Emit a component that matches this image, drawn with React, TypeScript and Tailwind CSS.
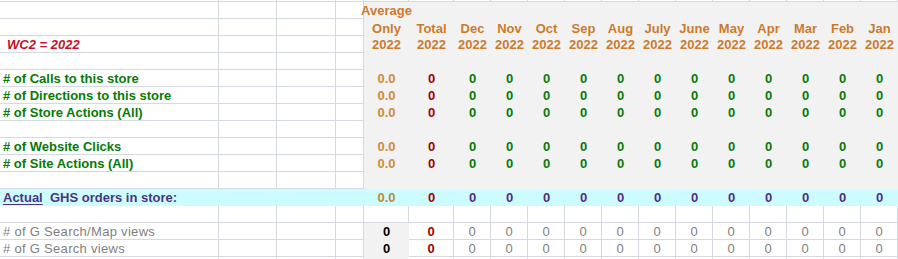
const months = ["Dec", "Nov", "Oct", "Sep", "Aug", "July", "June", "May", "Apr", "Mar", "Feb", "Jan"];

const grid = "grid grid-cols-[219px_58px_59px_28px_45px_45px_repeat(12,37px)]";
const line = "border-r border-b border-[#d5d9e1]";
const gray = "bg-[#f2f2f2]";
const cyan = "bg-[#ccfcff]";

const orange = "text-[#cc7a2c] font-bold";
const red = "text-[#9c0006] font-bold";
const green = "text-[#077a07] font-bold";
const purple = "text-[#4e2c8a] font-bold";

function Cell({ className = "", children }: { className?: string; children?: React.ReactNode }) {
  return (
    <div className={`h-full flex items-center justify-center whitespace-nowrap overflow-visible ${className}`}>
      {children}
    </div>
  );
}

// the four white columns on the left, label in the first one
function LeftCells({ label, labelClass = "", fill }: { label?: React.ReactNode; labelClass?: string; fill?: string }) {
  const base = fill ? fill : line;
  return (
    <>
      <Cell className={`${base} justify-start pl-[3px] ${labelClass}`}>{label}</Cell>
      <Cell className={base} />
      <Cell className={base} />
      <Cell className={base} />
    </>
  );
}

function GrayRow({ label, labelClass }: { label?: React.ReactNode; labelClass?: string }) {
  return (
    <div className={`${grid} h-[17px]`}>
      <LeftCells label={label} labelClass={labelClass} />
      {Array.from({ length: 14 }).map((_, i) => (
        <Cell key={i} className={gray} />
      ))}
    </div>
  );
}

function DataRow({ label }: { label: string }) {
  return (
    <div className={`${grid} h-[17px]`}>
      <LeftCells label={label} labelClass={green} />
      <Cell className={`${gray} text-[#d08a3c] font-bold`}>0.0</Cell>
      <Cell className={`${gray} ${red}`}>0</Cell>
      {months.map((m) => (
        <Cell key={m} className={`${gray} ${green}`}>0</Cell>
      ))}
    </div>
  );
}

function ViewsRow({ label }: { label: string }) {
  return (
    <div className={`${grid} h-[17px]`}>
      <LeftCells label={label} labelClass="text-[#7f7f7f] tracking-[0.3px]" />
      <Cell className={`${gray} font-bold text-black`}>0</Cell>
      <Cell className={`${line} ${red}`}>0</Cell>
      {months.map((m) => (
        <Cell key={m} className={`${line} text-[#808080]`}>0</Cell>
      ))}
    </div>
  );
}

export default function App() {
  return (
    <div className="w-[898px] h-[259px] overflow-hidden bg-white font-['Liberation_Sans',Arial,sans-serif] text-[13px] leading-none">
      {/* sliver of the row above */}
      <div className={`${grid} h-[2px]`}>
        {Array.from({ length: 18 }).map((_, i) => (
          <div key={i} className={line} />
        ))}
      </div>

      {/* header */}
      <div className={`${grid} h-[17px]`}>
        <LeftCells />
        <Cell className={gray}>
          <span className={`relative z-10 ${orange}`}>Average</span>
        </Cell>
        {Array.from({ length: 13 }).map((_, i) => (
          <Cell key={i} className={gray} />
        ))}
      </div>
      <div className={`${grid} h-[17px]`}>
        <LeftCells />
        <Cell className={`${gray} ${orange} pt-[2px]`}>Only</Cell>
        <Cell className={`${gray} ${orange} pt-[2px]`}>Total</Cell>
        {months.map((m) => (
          <Cell key={m} className={`${gray} ${orange} pt-[2px]`}>{m}</Cell>
        ))}
      </div>
      <div className={`${grid} h-[17px]`}>
        <LeftCells label="WC2 = 2022" labelClass="pl-[7px] italic font-bold text-[#c4122c]" />
        {Array.from({ length: 14 }).map((_, i) => (
          <Cell key={i} className={`${gray} ${orange}`}>2022</Cell>
        ))}
      </div>
      <GrayRow />

      <DataRow label="# of Calls to this store" />
      <DataRow label="# of Directions to this store" />
      <DataRow label="# of Store Actions (All)" />
      <GrayRow />
      <DataRow label="# of Website Clicks" />
      <DataRow label="# of Site Actions (All)" />
      <GrayRow />

      {/* orders */}
      <div className={`${grid} h-[17px]`}>
        <LeftCells
          fill={cyan}
          labelClass="text-[#4b3582] font-bold"
          label={
            <span className="whitespace-pre">
              <span className="underline underline-offset-2">Actual</span>{"  GHS orders in store:"}
            </span>
          }
        />
        <Cell className={`${cyan} text-[#b98a42] font-bold`}>0.0</Cell>
        <Cell className={`${cyan} ${red}`}>0</Cell>
        {months.map((m) => (
          <Cell key={m} className={`${cyan} ${purple}`}>0</Cell>
        ))}
      </div>

      <div className={`${grid} h-[17px]`}>
        {Array.from({ length: 18 }).map((_, i) => (
          <div key={i} className={line} />
        ))}
      </div>

      <ViewsRow label="# of G Search/Map views" />
      <ViewsRow label="# of G Search views" />

      <div className={`${grid} h-[3px]`}>
        <LeftCells />
        <div className={gray} />
        {Array.from({ length: 13 }).map((_, i) => (
          <div key={i} className={line} />
        ))}
      </div>
    </div>
  );
}
